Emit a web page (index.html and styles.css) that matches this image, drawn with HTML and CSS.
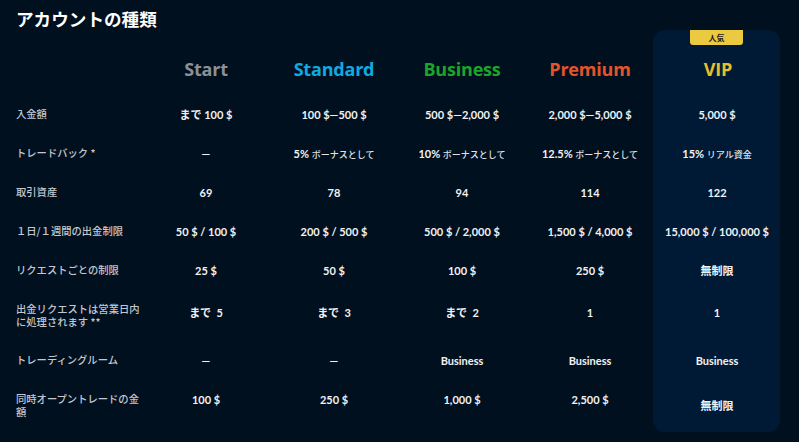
FILE: index.html
```html
<!DOCTYPE html>
<html lang="ja">
<head>
<meta charset="utf-8">
<link rel="stylesheet" href="styles.css">
</head>
<body>
<div class="page">
  <h1 class="title">アカウントの種類</h1>
  <div class="table">
    <div class="vip-card"><span class="badge">人気</span></div>

    <div class="cell head-label"></div>
    <div class="cell head start">Start</div>
    <div class="cell head standard">Standard</div>
    <div class="cell head business">Business</div>
    <div class="cell head premium">Premium</div>
    <div class="cell head vip">VIP</div>

    <div class="cell label">入金額</div>
    <div class="cell val">まで 100 $</div>
    <div class="cell val">100 $—500 $</div>
    <div class="cell val">500 $—2,000 $</div>
    <div class="cell val">2,000 $—5,000 $</div>
    <div class="cell val vipc">5,000 $</div>

    <div class="cell label">トレードバック *</div>
    <div class="cell val">—</div>
    <div class="cell val">5% <span class="note">ボーナスとして</span></div>
    <div class="cell val">10% <span class="note">ボーナスとして</span></div>
    <div class="cell val">12.5% <span class="note">ボーナスとして</span></div>
    <div class="cell val vipc">15% <span class="note">リアル資金</span></div>

    <div class="cell label">取引資産</div>
    <div class="cell val">69</div>
    <div class="cell val">78</div>
    <div class="cell val">94</div>
    <div class="cell val">114</div>
    <div class="cell val vipc">122</div>

    <div class="cell label">１日/１週間の出金制限</div>
    <div class="cell val">50 $ / 100 $</div>
    <div class="cell val">200 $ / 500 $</div>
    <div class="cell val">500 $ / 2,000 $</div>
    <div class="cell val">1,500 $ / 4,000 $</div>
    <div class="cell val vipc">15,000 $ / 100,000 $</div>

    <div class="cell label">リクエストごとの制限</div>
    <div class="cell val">25 $</div>
    <div class="cell val">50 $</div>
    <div class="cell val">100 $</div>
    <div class="cell val">250 $</div>
    <div class="cell val vipc">無制限</div>

    <div class="cell label">出金リクエストは営業日内に処理されます **</div>
    <div class="cell val low">まで&nbsp; 5</div>
    <div class="cell val low">まで&nbsp; 3</div>
    <div class="cell val low">まで&nbsp; 2</div>
    <div class="cell val low">1</div>
    <div class="cell val low vipc">1</div>

    <div class="cell label">トレーディングルーム</div>
    <div class="cell val">—</div>
    <div class="cell val">—</div>
    <div class="cell val">Business</div>
    <div class="cell val">Business</div>
    <div class="cell val vipc">Business</div>

    <div class="cell label">同時オープントレードの金額</div>
    <div class="cell val">100 $</div>
    <div class="cell val">250 $</div>
    <div class="cell val">1,000 $</div>
    <div class="cell val">2,500 $</div>
    <div class="cell val vipc lastvip">無制限</div>
  </div>
</div>
</body>
</html>
```

FILE: styles.css
```css
html, body {
  margin: 0;
  padding: 0;
  background: #00101f;
}
body {
  width: 799px;
  height: 442px;
  overflow: hidden;
  font-family: Lato, "Noto Sans CJK JP", sans-serif;
  color: #ffffff;
}
.page {
  padding: 7px 0 0 16px;
}
.title {
  margin: 0;
  font-family: "Noto Sans CJK JP", sans-serif;
  font-size: 17.6px;
  line-height: 23px;
  font-weight: 700;
  color: #ffffff;
}
.table {
  position: relative;
  display: grid;
  grid-template-columns: 126px repeat(5, 128px);
  grid-template-rows: 65px 39px 39px 39px 39px 39px 51px 39px 52px;
}
.vip-card {
  position: absolute;
  top: 0;
  bottom: 0;
  left: 637px;
  width: 127px;
  background: #001a35;
  border-radius: 12px;
  z-index: 0;
}
.badge {
  position: absolute;
  top: 0;
  left: 37px;
  width: 53px;
  height: 15px;
  background: #ebc940;
  border-radius: 0 0 3px 3px;
  color: #1a1a1a;
  font-family: "Noto Sans CJK JP", sans-serif;
  font-size: 8px;
  font-weight: 700;
  line-height: 15px;
  text-align: center;
}
.cell {
  position: relative;
  z-index: 1;
}
.head {
  padding-top: 28px;
  text-align: center;
  font-family: "Open Sans", sans-serif;
  font-weight: 700;
  font-size: 18px;
  line-height: 22px;
  letter-spacing: -0.2px;
}
.head.start { color: #8c9196; }
.head.standard { color: #12a9e0; }
.head.business { color: #1ba52b; }
.head.premium { color: #e2552c; }
.head.vip { color: #e6bf2e; }
.label {
  padding-top: 12px;
  font-family: "Noto Sans CJK JP", sans-serif;
  font-size: 10.3px;
  line-height: 13px;
  font-weight: 500;
  color: #c4c8ce;
}
.val {
  padding-top: 13px;
  text-align: center;
  font-weight: 700;
  font-size: 11px;
  line-height: 14px;
  color: #f2f2f2;
  white-space: nowrap;
}
.val.low {
  padding-top: 16px;
}
.val.vipc {
  margin-left: -2px;
}
.val.lastvip {
  padding-top: 19px;
}
.note {
  font-family: "Noto Sans CJK JP", sans-serif;
  font-weight: 500;
  font-size: 9px;
  color: #dfe2e6;
}
```
